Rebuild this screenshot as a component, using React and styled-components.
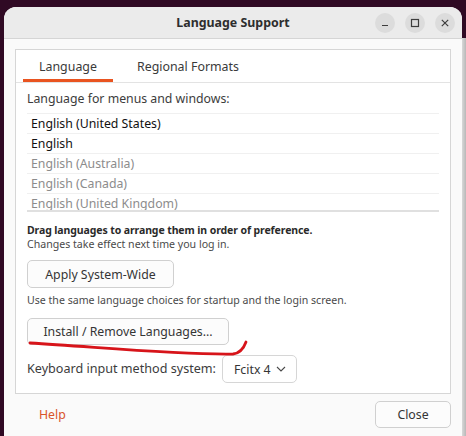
import React from 'react'
import styled, { createGlobalStyle } from 'styled-components'

const GlobalStyle = createGlobalStyle`
  html, body {
    margin: 0;
    padding: 0;
    background: #300a24;
    font-family: "Noto Sans", "DejaVu Sans", sans-serif;
    overflow: hidden;
  }
`

const languages = [
  { name: 'English (United States)', active: true },
  { name: 'English', active: true },
  { name: 'English (Australia)', active: false },
  { name: 'English (Canada)', active: false },
  { name: 'English (United Kingdom)', active: false },
]

const App = () => {
  return (
    <>
      <GlobalStyle />
      <Desktop>
        <Window>
          <TitleBar>
            <Title>Language Support</Title>
            <Controls>
              <CtrlButton aria-label="minimize">
                <svg width="10" height="10" viewBox="0 0 10 10">
                  <path d="M2 7.5h6" stroke="#3d3d3d" strokeWidth="1.2" />
                </svg>
              </CtrlButton>
              <CtrlButton aria-label="maximize">
                <svg width="10" height="10" viewBox="0 0 10 10">
                  <rect x="1.5" y="1.5" width="7" height="7" fill="none" stroke="#3d3d3d" strokeWidth="1.2" />
                </svg>
              </CtrlButton>
              <CtrlButton aria-label="close">
                <svg width="10" height="10" viewBox="0 0 10 10">
                  <path d="M1.8 1.8l6.4 6.4M8.2 1.8l-6.4 6.4" stroke="#3d3d3d" strokeWidth="1.2" />
                </svg>
              </CtrlButton>
            </Controls>
          </TitleBar>

          <Body>
            <Notebook>
              <Tabs>
                <Tab $active>Language</Tab>
                <Tab>Regional Formats</Tab>
              </Tabs>

              <Page>
                <Label>Language for menus and windows:</Label>
                <LangList>
                  {languages.map((l) => (
                    <LangRow key={l.name} $active={l.active}>{l.name}</LangRow>
                  ))}
                </LangList>

                <Hint $bold $mt="11px">Drag languages to arrange them in order of preference.</Hint>
                <Hint>Changes take effect next time you log in.</Hint>

                <Button $width="147px" $height="28px" $mt="9px">Apply System-Wide</Button>
                <Hint $mt="5px">Use the same language choices for startup and the login screen.</Hint>

                <Marked>
                  <Button $width="202px">Install / Remove Languages...</Button>
                  <Scribble width="230" height="20" viewBox="0 0 230 20">
                    <path
                      d="M2 3 C 70 7, 150 15, 205 14 Q 214 13, 218 2"
                      fill="none"
                      stroke="#d7141a"
                      strokeWidth="2.8"
                      strokeLinecap="round"
                    />
                  </Scribble>
                </Marked>

                <InputRow>
                  <Label $size="12.6px">Keyboard input method system:</Label>
                  <Dropdown>
                    Fcitx 4
                    <svg width="10" height="6" viewBox="0 0 10 6">
                      <path d="M1 1l4 4 4-4" fill="none" stroke="#4a4a4a" strokeWidth="1.1" />
                    </svg>
                  </Dropdown>
                </InputRow>
              </Page>
            </Notebook>

            <Footer>
              <HelpLink>Help</HelpLink>
              <Button $width="76px">Close</Button>
            </Footer>
          </Body>
        </Window>
        <BehindWindow />
      </Desktop>
    </>
  )
}

const Desktop = styled.div`
  display: flex;
  align-items: flex-start;
  height: 436px;
  padding: 7px 0 0 4px;
  box-sizing: border-box;
`

const BehindWindow = styled.div`
  flex: 1;
  margin-top: 31px;
  height: 420px;
  background: linear-gradient(to right, #d8d8d8, #b8b8b8);
`

const Window = styled.div`
  width: 458px;
  height: 440px;
  flex-shrink: 0;
  background: #fafafa;
  border-radius: 12px 12px 0 0;
  overflow: hidden;
  display: flex;
  flex-direction: column;
`

const TitleBar = styled.div`
  position: relative;
  height: 31px;
  background: #ebebeb;
  border-bottom: 1px solid #d5d5d5;
  display: flex;
  align-items: center;
  justify-content: center;
  flex-shrink: 0;
`

const Title = styled.div`
  font-size: 12.4px;
  font-weight: 700;
  color: #2e2e2e;
`

const Controls = styled.div`
  position: absolute;
  right: 7px;
  top: 6px;
  display: flex;
  gap: 10px;
`

const CtrlButton = styled.div`
  width: 20px;
  height: 20px;
  border-radius: 50%;
  background: #dcdcdc;
  display: flex;
  align-items: center;
  justify-content: center;
`

const Body = styled.div`
  padding: 10px 11px 0 11px;
  display: flex;
  flex-direction: column;
`

const Notebook = styled.div`
  border: 1px solid #d6d6d6;
  background: #ffffff;
  height: 345px;
  box-sizing: border-box;
  display: flex;
  flex-direction: column;
`

const Tabs = styled.div`
  display: flex;
  gap: 8px;
  padding: 0 7px;
  height: 32px;
  border-bottom: 1px solid #e3e3e3;
  flex-shrink: 0;
`

const Tab = styled.div`
  display: flex;
  align-items: center;
  justify-content: center;
  padding: 0 16px;
  font-size: 12.4px;
  color: #3a3a3a;
  box-shadow: ${(p) => (p.$active ? 'inset 0 -3px 0 #e95420' : 'none')};
`

const Page = styled.div`
  padding: 7px 11px 0 11px;
  display: flex;
  flex-direction: column;
  align-items: flex-start;
`

const Label = styled.div`
  font-size: ${(p) => p.$size || '12.3px'};
  color: #3c3c3c;
  line-height: 18px;
`

const LangList = styled.div`
  align-self: stretch;
  margin-top: 5px;
  height: 99px;
  overflow: hidden;
  border-bottom: 2px solid #e0e0e0;
  box-sizing: border-box;
`

const LangRow = styled.div`
  height: 19px;
  line-height: 19px;
  border-top: 1px solid #f0f0f0;
  padding-left: 4px;
  font-size: 12.3px;
  color: ${(p) => (p.$active ? '#111111' : '#8c8c8c')};
`

const Hint = styled.div`
  font-size: ${(p) => (p.$bold ? '10.5px' : '10.6px')};
  letter-spacing: ${(p) => (p.$bold ? '-0.1px' : '0')};
  line-height: 14px;
  color: ${(p) => (p.$bold ? '#2a2a2a' : '#4a4a4a')};
  font-weight: ${(p) => (p.$bold ? 700 : 400)};
  margin-top: ${(p) => p.$mt || '0'};
`

const Button = styled.div`
  width: ${(p) => p.$width};
  height: ${(p) => p.$height || '27px'};
  margin-top: ${(p) => p.$mt || '0'};
  box-sizing: border-box;
  border: 1px solid #d0d0d0;
  border-radius: 5px;
  background: #fcfcfc;
  display: flex;
  align-items: center;
  justify-content: center;
  font-size: 12.3px;
  color: #353535;
`

const Marked = styled.div`
  position: relative;
  margin-top: 11px;
`

const Scribble = styled.svg`
  position: absolute;
  left: 1px;
  top: 22px;
  overflow: visible;
`

const InputRow = styled.div`
  display: flex;
  align-items: center;
  gap: 6px;
  margin-top: 10px;
`

const Dropdown = styled.div`
  height: 28px;
  box-sizing: border-box;
  padding: 0 10px 0 11px;
  border: 1px solid #d6d6d6;
  border-radius: 5px;
  display: flex;
  align-items: center;
  gap: 5px;
  font-size: 12.3px;
  color: #353535;
`

const Footer = styled.div`
  display: flex;
  align-items: center;
  justify-content: space-between;
  padding: 7px 0 0 24px;
`

const HelpLink = styled.div`
  font-size: 12.3px;
  color: #d9542b;
`

export default App
